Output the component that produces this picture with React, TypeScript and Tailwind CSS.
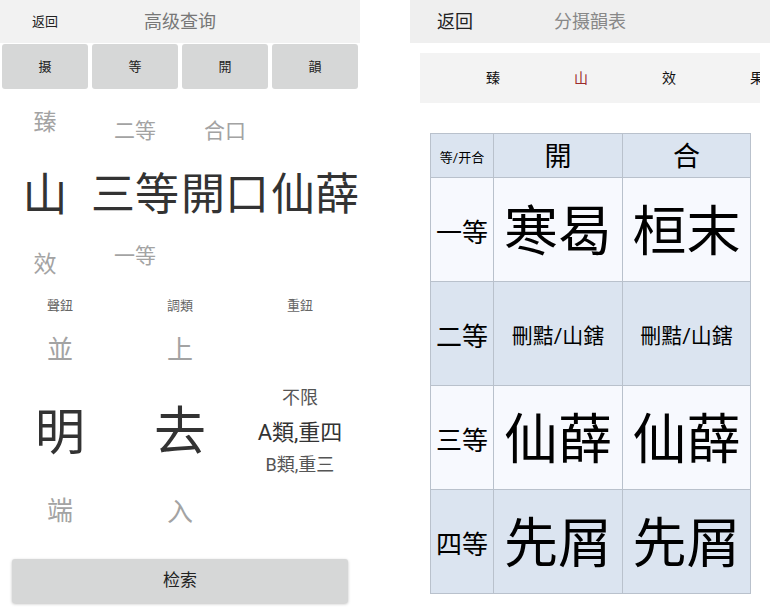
const FONT = { fontFamily: 'Roboto, "Noto Sans CJK SC", sans-serif' };

function LeftPanel() {
  const tabs = ["摄", "等", "開", "韻"];
  return (
    <div className="w-[360px] flex flex-col">
      <div className="h-[43px] bg-[#f2f2f2] grid grid-cols-[90px_180px_90px] items-center">
        <span className="text-center text-[13px] text-[#222]">返回</span>
        <span className="text-center text-[18px] text-[#777]">高级查询</span>
      </div>

      <div className="grid grid-cols-4 mt-[1px]">
        {tabs.map((t) => (
          <div
            key={t}
            className="mx-[2px] h-[45px] rounded-[3px] bg-[#d6d7d7] flex items-center justify-center text-[13px] text-[#222]"
          >
            {t}
          </div>
        ))}
      </div>

      {/* first wheel: 攝 / 等 / 開合 / 韻 */}
      <div className="h-[201px] grid grid-cols-4 leading-none">
        <div className="flex flex-col items-center">
          <span className="mt-[20px] text-[23px] leading-[28px] text-[#a3a3a3]">臻</span>
          <span className="mt-[34px] text-[45px] leading-[50px] text-[#333]">山</span>
          <span className="mt-[30px] text-[23px] leading-[28px] text-[#a3a3a3]">效</span>
        </div>
        <div className="flex flex-col items-center">
          <span className="mt-[29px] text-[21px] leading-[26px] text-[#a3a3a3]">二等</span>
          <span className="mt-[26px] text-[44px] leading-[50px] text-[#333] whitespace-nowrap">三等</span>
          <span className="mt-[23px] text-[21px] leading-[26px] text-[#a3a3a3]">一等</span>
        </div>
        <div className="flex flex-col items-center">
          <span className="mt-[29px] text-[21px] leading-[26px] text-[#a3a3a3]">合口</span>
          <span className="mt-[26px] text-[44px] leading-[50px] text-[#333] whitespace-nowrap">開口</span>
        </div>
        <div className="flex flex-col items-center">
          <span className="mt-[81px] text-[44px] leading-[50px] text-[#333] whitespace-nowrap">仙薛</span>
        </div>
      </div>

      {/* second wheel: 聲鈕 / 調類 / 重鈕 */}
      <div className="grid grid-cols-3 mt-[8px] text-[13px] leading-[16px] text-[#666] text-center">
        <span>聲鈕</span>
        <span>調類</span>
        <span>重鈕</span>
      </div>
      <div className="h-[245px] grid grid-cols-3">
        <div className="flex flex-col items-center">
          <span className="mt-[21px] text-[26px] leading-[30px] text-[#a3a3a3]">並</span>
          <span className="mt-[41px] text-[50px] leading-[54px] text-[#333]">明</span>
          <span className="mt-[36px] text-[26px] leading-[30px] text-[#a3a3a3]">端</span>
        </div>
        <div className="flex flex-col items-center">
          <span className="mt-[21px] text-[26px] leading-[30px] text-[#a3a3a3]">上</span>
          <span className="mt-[41px] text-[52px] leading-[54px] text-[#333]">去</span>
          <span className="mt-[37px] text-[26px] leading-[30px] text-[#a3a3a3]">入</span>
        </div>
        <div className="flex flex-col items-center whitespace-nowrap">
          <span className="mt-[73px] text-[18px] leading-[22px] text-[#555]">不限</span>
          <span className="mt-[11px] text-[22px] leading-[26px] text-[#333]">A類,重四</span>
          <span className="mt-[8px] text-[18px] leading-[22px] text-[#555]">B類,重三</span>
        </div>
      </div>

      <button className="mx-[12px] h-[44px] rounded-[3px] bg-[#d6d7d7] shadow-[0_1px_3px_rgba(0,0,0,0.25)] text-[17px] text-[#222]">
        检索
      </button>
    </div>
  );
}

const rows = [
  { label: "一等", kai: "寒曷", he: "桓末", big: true, bg: "bg-[#f7f9fe]" },
  { label: "二等", kai: "刪黠/山鎋", he: "刪黠/山鎋", big: false, bg: "bg-[#dbe4f0]" },
  { label: "三等", kai: "仙薛", he: "仙薛", big: true, bg: "bg-[#f7f9fe]" },
  { label: "四等", kai: "先屑", he: "先屑", big: true, bg: "bg-[#dbe4f0]" },
];

function RightPanel() {
  const rhymes = ["臻", "山", "效", "果"];
  return (
    <div className="w-[360px] flex flex-col">
      <div className="h-[43px] bg-[#efefef] grid grid-cols-[90px_180px_90px] items-center">
        <span className="text-center text-[18px] text-[#222]">返回</span>
        <span className="text-center text-[18px] text-[#888]">分摄韻表</span>
      </div>

      <div className="mt-[10px] mx-[10px] h-[50px] bg-[#f3f3f3] flex items-center overflow-hidden pl-[29px]">
        {rhymes.map((r) => (
          <span
            key={r}
            className={`w-[88px] shrink-0 text-center text-[14px] ${r === "山" ? "text-[#9b2a2a]" : "text-[#111]"}`}
          >
            {r}
          </span>
        ))}
      </div>

      <table className="mt-[30px] mx-[20px] w-[320px] border-collapse table-fixed text-black text-center leading-none">
        <colgroup>
          <col className="w-[63px]" />
          <col className="w-[129px]" />
          <col className="w-[128px]" />
        </colgroup>
        <thead>
          <tr className="h-[44px] bg-[#dbe4f0]">
            <th className="border border-[#b9c1cc] pt-[3px] text-[13px] font-normal">等/开合</th>
            <th className="border border-[#b9c1cc] pt-[4px] text-[27px] font-normal">開</th>
            <th className="border border-[#b9c1cc] pt-[4px] text-[27px] font-normal">合</th>
          </tr>
        </thead>
        <tbody>
          {rows.map((r) => (
            <tr key={r.label} className={`h-[104px] ${r.bg}`}>
              <td className="border border-[#b9c1cc] pt-[6px] text-[26px]">{r.label}</td>
              <td className={`border border-[#b9c1cc] pt-[6px] whitespace-nowrap ${r.big ? "text-[54px]" : "text-[21px]"}`}>
                {r.kai}
              </td>
              <td className={`border border-[#b9c1cc] pt-[6px] whitespace-nowrap ${r.big ? "text-[54px]" : "text-[21px]"}`}>
                {r.he}
              </td>
            </tr>
          ))}
        </tbody>
      </table>
    </div>
  );
}

export default function App() {
  return (
    <div className="w-[770px] h-[615px] bg-white flex gap-[50px] overflow-hidden" style={FONT}>
      <LeftPanel />
      <RightPanel />
    </div>
  );
}
